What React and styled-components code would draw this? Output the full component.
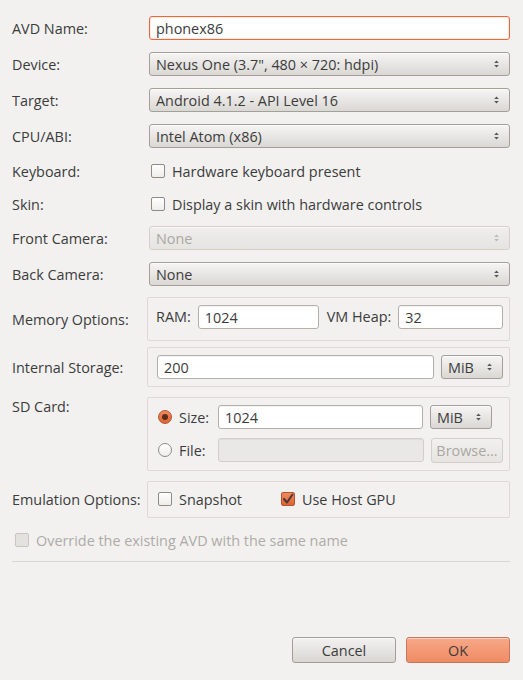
import React from 'react'
import styled, { createGlobalStyle, css } from 'styled-components'

const GlobalStyle = createGlobalStyle`
  html, body {
    margin: 0;
    padding: 0;
    background: #f2f1f0;
  }
  body {
    font-family: "Open Sans", "DejaVu Sans", sans-serif;
    font-size: 14.4px;
    color: #3c3c3c;
  }
`

const Dialog = styled.div`
  height: 680px;
  box-sizing: border-box;
  padding: 16px 13px 17px 12px;
  display: flex;
  flex-direction: column;
`

const Row = styled.div`
  display: flex;
  align-items: ${p => (p.$top ? 'flex-start' : 'center')};
  height: ${p => p.$h ?? 24}px;
  margin-top: ${p => p.$mt ?? 0}px;
`

const Label = styled.div`
  width: 137px;
  flex: none;
  color: #3c3c3c;
  white-space: nowrap;
  padding-top: ${p => p.$pt ?? 0}px;
`

const Field = styled.div`
  flex: 1;
  min-width: 0;
  display: flex;
  align-items: center;
  height: 100%;
`

const TextInput = styled.div`
  box-sizing: border-box;
  height: 24px;
  width: ${p => (p.$w ? `${p.$w}px` : 'auto')};
  flex: ${p => (p.$w ? 'none' : 1)};
  border: 1px solid ${p => (p.$focus ? '#e9693c' : '#b3afa9')};
  border-radius: 3px;
  background: ${p => (p.$disabled ? '#eae8e6' : '#fff')};
  padding: 0 6px;
  display: flex;
  align-items: center;
  color: #3c3c3c;
  box-shadow: ${p => (p.$focus ? 'inset 0 0 0 1px rgba(233,105,60,0.15)' : 'inset 0 1px 1px rgba(0,0,0,0.05)')};
  ${p => p.$disabled && css`border-color: #d2cfca;`}
`

const SelectBox = styled.div`
  box-sizing: border-box;
  height: 24px;
  width: ${p => (p.$w ? `${p.$w}px` : 'auto')};
  flex: ${p => (p.$w ? 'none' : 1)};
  margin-left: ${p => p.$ml ?? 0}px;
  margin-right: ${p => p.$mr ?? 0}px;
  border: 1px solid ${p => (p.$disabled ? '#d3d0cb' : '#a39f99')};
  border-radius: 3px;
  background: ${p => (p.$disabled
    ? 'linear-gradient(#efeeec, #e6e4e1)'
    : 'linear-gradient(#f6f5f4, #dad8d4)')};
  color: ${p => (p.$disabled ? '#aaa7a2' : '#3c3c3c')};
  display: flex;
  align-items: center;
  padding: 0 9px 0 6px;
  justify-content: space-between;
  box-shadow: inset 0 1px 0 rgba(255,255,255,0.6);
`

const Arrows = ({ faded }) => (
  <svg width="7" height="10" viewBox="0 0 7 10">
    <path d="M3.5 1.5 L5.8 4 L1.2 4 Z" fill={faded ? '#bcb9b4' : '#555'} />
    <path d="M3.5 8.5 L5.8 6 L1.2 6 Z" fill={faded ? '#bcb9b4' : '#555'} />
  </svg>
)

const Select = ({ children, disabled, w, ml, mr }) => (
  <SelectBox $disabled={disabled} $w={w} $ml={ml} $mr={mr}>
    <span>{children}</span>
    <Arrows faded={disabled} />
  </SelectBox>
)

const Box = styled.span`
  box-sizing: border-box;
  width: 14px;
  height: 14px;
  flex: none;
  border-radius: 2px;
  display: inline-flex;
  align-items: center;
  justify-content: center;
  margin-right: 7px;
  border: 1px solid ${p => (p.$checked ? '#b5542e' : p.$disabled ? '#c9c6c1' : '#8e8a84')};
  background: ${p => (p.$checked
    ? 'linear-gradient(#f08a5f, #de6332)'
    : p.$disabled ? '#e4e2df' : 'linear-gradient(#ffffff, #eeedeb)')};
`

const CheckLabel = styled.label`
  display: flex;
  align-items: center;
  height: ${p => p.$h ?? 24}px;
  width: ${p => (p.$w ? `${p.$w}px` : 'auto')};
  flex: none;
  color: ${p => (p.$disabled ? '#aeaba6' : '#3c3c3c')};
  margin-left: ${p => p.$ml ?? 0}px;
  white-space: nowrap;
`

const Check = ({ checked, disabled, children, ml, w, h }) => (
  <CheckLabel $disabled={disabled} $ml={ml} $w={w} $h={h}>
    <Box $checked={checked} $disabled={disabled}>
      {checked && (
        <svg width="12" height="12" viewBox="0 0 12 12">
          <path d="M2 6 L5 9.5 L10.5 1.5" stroke="#4a3a34" strokeWidth="2" fill="none" strokeLinecap="round" strokeLinejoin="round" />
        </svg>
      )}
    </Box>
    {children}
  </CheckLabel>
)

const RadioDot = styled.span`
  box-sizing: border-box;
  width: 14px;
  height: 14px;
  flex: none;
  border-radius: 50%;
  display: inline-flex;
  align-items: center;
  justify-content: center;
  margin-right: 7px;
  border: 1px solid ${p => (p.$checked ? '#b5542e' : '#8e8a84')};
  background: ${p => (p.$checked ? 'linear-gradient(#f08a5f, #de6332)' : 'linear-gradient(#ffffff, #eeedeb)')};
  &::after {
    content: '';
    display: ${p => (p.$checked ? 'block' : 'none')};
    width: 6px;
    height: 6px;
    border-radius: 50%;
    background: #5a2c1c;
  }
`

const Radio = ({ checked, children }) => (
  <CheckLabel $w={60}>
    <RadioDot $checked={checked} />
    {children}
  </CheckLabel>
)

const Frame = styled.div`
  flex: 1;
  box-sizing: border-box;
  margin-left: -2px;
  height: 100%;
  border: 1px solid #dddad6;
  border-radius: 2px;
  padding: ${p => p.$pad || '7px 6px 0 8px'};
  display: flex;
  flex-direction: ${p => (p.$column ? 'column' : 'row')};
  align-items: ${p => (p.$column ? 'stretch' : 'flex-start')};
  gap: ${p => p.$gap ?? 0}px;
`

const Inline = styled.span`
  flex: none;
  line-height: 24px;
  margin-left: ${p => p.$ml ?? 0}px;
  margin-right: ${p => p.$mr ?? 7}px;
  white-space: nowrap;
`

const SubRow = styled.div`
  display: flex;
  align-items: center;
  height: 24px;
`

const SmallButton = styled.div`
  box-sizing: border-box;
  width: 72px;
  height: 25px;
  margin-left: 7px;
  border: 1px solid #d3d0cb;
  border-radius: 3px;
  background: linear-gradient(#f1f0ee, #e7e5e2);
  color: #aaa7a2;
  display: flex;
  align-items: center;
  justify-content: center;
`

const Separator = styled.div`
  height: 1px;
  background: #d9d7d3;
  margin-top: 10px;
`

const Spacer = styled.div`
  flex: 1;
`

const Buttons = styled.div`
  display: flex;
  justify-content: flex-end;
  gap: 10px;
`

const Button = styled.button`
  box-sizing: border-box;
  width: 104px;
  height: 26px;
  border-radius: 3px;
  font-family: inherit;
  font-size: 14.4px;
  color: #3c3c3c;
  border: 1px solid ${p => (p.$primary ? '#c8765a' : '#a29e98')};
  background: ${p => (p.$primary
    ? 'linear-gradient(#f7a887, #ef8b63)'
    : 'linear-gradient(#f3f2f1, #d9d7d3)')};
  box-shadow: inset 0 1px 0 rgba(255,255,255,0.5);
  padding: 0;
`

const App = () => {
  return (
    <>
      <GlobalStyle />
      <Dialog>
        <Row>
          <Label>AVD Name:</Label>
          <Field><TextInput $focus>phonex86</TextInput></Field>
        </Row>
        <Row $mt={12}>
          <Label>Device:</Label>
          <Field><Select>Nexus One (3.7", 480 × 720: hdpi)</Select></Field>
        </Row>
        <Row $mt={12}>
          <Label>Target:</Label>
          <Field><Select>Android 4.1.2 - API Level 16</Select></Field>
        </Row>
        <Row $mt={12}>
          <Label>CPU/ABI:</Label>
          <Field><Select>Intel Atom (x86)</Select></Field>
        </Row>
        <Row $mt={12} $h={22}>
          <Label>Keyboard:</Label>
          <Field><Check ml={2}>Hardware keyboard present</Check></Field>
        </Row>
        <Row $mt={11} $h={22}>
          <Label>Skin:</Label>
          <Field><Check ml={2}>Display a skin with hardware controls</Check></Field>
        </Row>
        <Row $mt={11}>
          <Label>Front Camera:</Label>
          <Field><Select disabled>None</Select></Field>
        </Row>
        <Row $mt={12}>
          <Label>Back Camera:</Label>
          <Field><Select>None</Select></Field>
        </Row>
        <Row $mt={11} $h={44}>
          <Label>Memory Options:</Label>
          <Field>
            <Frame>
              <Inline>RAM:</Inline>
              <TextInput $w={121}>1024</TextInput>
              <Inline $ml={8}>VM Heap:</Inline>
              <TextInput>32</TextInput>
            </Frame>
          </Field>
        </Row>
        <Row $mt={6} $h={40}>
          <Label>Internal Storage:</Label>
          <Field>
            <Frame $pad="7px 6px 0 9px">
              <TextInput>200</TextInput>
              <Select w={62} ml={7}>MiB</Select>
            </Frame>
          </Field>
        </Row>
        <Row $mt={10} $h={74} $top>
          <Label>SD Card:</Label>
          <Field>
            <Frame $column $gap={9} $pad="7px 6px 0 10px">
              <SubRow>
                <Radio checked>Size:</Radio>
                <TextInput>1024</TextInput>
                <Select w={62} ml={7} mr={11}>MiB</Select>
              </SubRow>
              <SubRow>
                <Radio>File:</Radio>
                <TextInput $disabled />
                <SmallButton>Browse...</SmallButton>
              </SubRow>
            </Frame>
          </Field>
        </Row>
        <Row $mt={10} $h={37}>
          <Label>Emulation Options:</Label>
          <Field>
            <Frame $pad="6px 6px 0 10px">
              <Check w={123} h={22}>Snapshot</Check>
              <Check checked h={22}>Use Host GPU</Check>
            </Frame>
          </Field>
        </Row>
        <Row $mt={11} $h={22}>
          <Check ml={3} disabled h={22}>Override the existing AVD with the same name</Check>
        </Row>
        <Separator />
        <Spacer />
        <Buttons>
          <Button>Cancel</Button>
          <Button $primary>OK</Button>
        </Buttons>
      </Dialog>
    </>
  )
}

export default App
